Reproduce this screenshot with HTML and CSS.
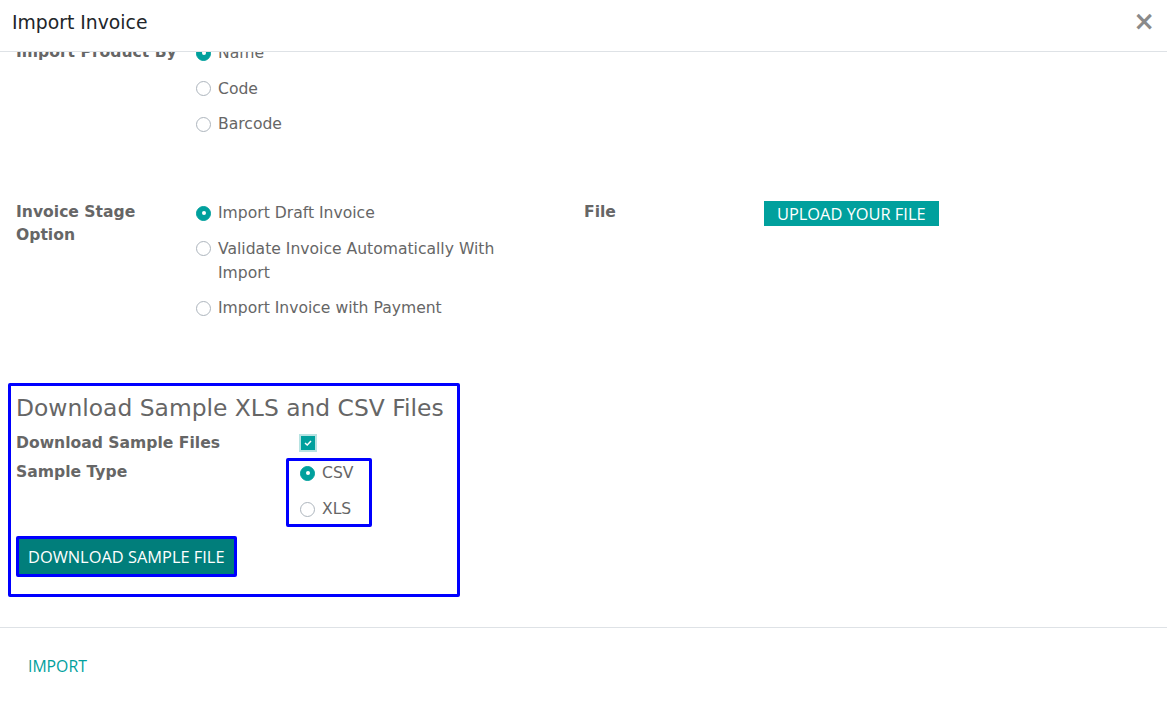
FILE: index.html
```html
<!DOCTYPE html>
<html>
<head>
<meta charset="utf-8">
<link rel="stylesheet" href="styles.css">
</head>
<body>
<div class="modal">
  <header class="modal-header">
    <h4 class="modal-title">Import Invoice</h4>
    <span class="close">×</span>
  </header>
  <main class="modal-body">
    <div class="body-inner">
      <div class="group-row first-row">
        <div class="label">Import Product By</div>
        <div class="radios">
          <div class="opt"><span class="radio checked"></span><span>Name</span></div>
          <div class="opt"><span class="radio"></span><span>Code</span></div>
          <div class="opt"><span class="radio"></span><span>Barcode</span></div>
        </div>
      </div>
      <div class="group-row second-row">
        <div class="label">Invoice Stage Option</div>
        <div class="radios">
          <div class="opt"><span class="radio checked"></span><span>Import Draft Invoice</span></div>
          <div class="opt"><span class="radio"></span><span>Validate Invoice Automatically With Import</span></div>
          <div class="opt"><span class="radio"></span><span>Import Invoice with Payment</span></div>
        </div>
        <div class="label file-label">File</div>
        <div class="file-field"><span class="btn btn-upload">UPLOAD YOUR FILE</span></div>
      </div>
      <section class="sample-box">
        <h3 class="sample-title">Download Sample XLS and CSV Files</h3>
        <div class="sample-grid">
          <div class="label row1">Download Sample Files</div>
          <div class="check-cell"><span class="checkbox"><svg width="8" height="6" viewBox="0 0 8 6"><path d="M1 3 L3.2 5 L7 1" fill="none" stroke="#fff" stroke-width="1.5"/></svg></span></div>
          <div class="label row2">Sample Type</div>
          <div class="type-box">
            <div class="opt"><span class="radio checked"></span><span>CSV</span></div>
            <div class="opt"><span class="radio"></span><span>XLS</span></div>
          </div>
        </div>
        <div class="dl-wrap"><span class="btn btn-download">DOWNLOAD SAMPLE FILE</span></div>
      </section>
    </div>
  </main>
  <footer class="modal-footer">
    <span class="btn-link">IMPORT</span>
  </footer>
</div>
</body>
</html>
```
FILE: styles.css
```css
* { box-sizing: border-box; }
html, body { margin: 0; padding: 0; }
body {
  width: 1167px;
  height: 704px;
  background: #fff;
  font-family: "DejaVu Sans", sans-serif;
  font-size: 15.6px;
  color: #666;
  overflow: hidden;
}
.modal { display: flex; flex-direction: column; height: 704px; }
.modal-header {
  height: 52px;
  border-bottom: 1px solid #dee2e6;
  display: flex;
  align-items: center;
  justify-content: space-between;
  padding: 0 12px 7px 12px;
  flex: none;
  position: relative;
  z-index: 2;
  background: #fff;
}
.modal-title {
  margin: 0;
  font-weight: normal;
  font-size: 18.8px;
  color: #212529;
}
.close {
  font-family: "DejaVu Sans", sans-serif;
  font-size: 26px;
  font-weight: bold;
  color: #8a8a8a;
  line-height: 1;
  margin-right: 0;
  margin-top: -2px;
}
.modal-body {
  flex: none;
  height: 576px;
  overflow: hidden;
  border-bottom: 1px solid #dee2e6;
}
.body-inner { padding: 0 16px; margin-top: -11px; }
.group-row {
  display: grid;
  grid-template-columns: 180px 388px 180px 1fr;
}
.label {
  font-weight: bold;
  color: #666;
  line-height: 23px;
  padding-right: 16px;
}
.radios { display: flex; flex-direction: column; gap: 11.5px; width: 320px; }
.opt { display: flex; align-items: flex-start; line-height: 24px; }
.radio {
  flex: none;
  width: 15px;
  height: 15px;
  border-radius: 50%;
  border: 1px solid #adb5bd;
  margin: 4.5px 7px 0 0;
  background: #fff;
  position: relative;
}
.radio.checked {
  background: #00a09d;
  border-color: #00a09d;
}
.radio.checked::after {
  content: "";
  position: absolute;
  left: 4.5px;
  top: 4.5px;
  width: 4px;
  height: 4px;
  border-radius: 50%;
  background: #fff;
}
.second-row { margin-top: 65px; }
.file-field { padding-top: 0; }
.btn-upload {
  display: inline-block;
  background: #00a09d;
  color: #fff;
  font-family: "Open Sans", sans-serif;
  font-size: 16.4px;
  line-height: 25px;
  height: 25px;
  padding: 0 13px;
}
.sample-box {
  margin: 63px 0 0 -8px;
  width: 452px;
  border: 3px solid #0000ff;
  border-radius: 2px;
  padding: 6px 5px 17px 5px;
}
.sample-title {
  margin: 0;
  font-weight: normal;
  font-size: 23.4px;
  line-height: 32px;
  color: #666;
}
.sample-grid {
  display: grid;
  grid-template-columns: 270px 1fr;
  grid-template-rows: 26.5px auto;
  margin-top: 7.5px;
}
.sample-grid .label { line-height: 23px; }
.sample-grid .row2 { margin-top: 2.5px; }
.check-cell { height: 23px; padding-left: 13px; display: flex; align-items: center; }
.checkbox {
  width: 18px;
  height: 18px;
  background: #00a09d;
  border: 2.5px solid #b7e3e2;
  display: flex;
  align-items: center;
  justify-content: center;
}
.type-box {
  width: 86px;
  border: 3px solid #0000ff;
  border-radius: 2px;
  padding: 0 11px 3px 11px;
  display: flex;
  flex-direction: column;
  gap: 12px;
}
.type-box .opt { line-height: 24px; }
.dl-wrap { margin-top: 9px; }
.btn-download {
  display: inline-block;
  border: 3px solid #0000ff;
  border-radius: 2px;
  background: #017e7b;
  color: #fff;
  font-family: "Open Sans", sans-serif;
  font-size: 16.4px;
  line-height: 35px;
  height: 41px;
  padding: 0 9px;
  margin-left: 0;
}
.modal-footer {
  flex: 1;
  padding: 0 12px;
  display: flex;
  align-items: flex-start;
  padding-top: 26px;
}
.btn-link {
  color: #00a09d;
  font-family: "Open Sans", sans-serif;
  font-size: 15.8px;
  padding: 0 16px;
  line-height: 24px;
}
```
